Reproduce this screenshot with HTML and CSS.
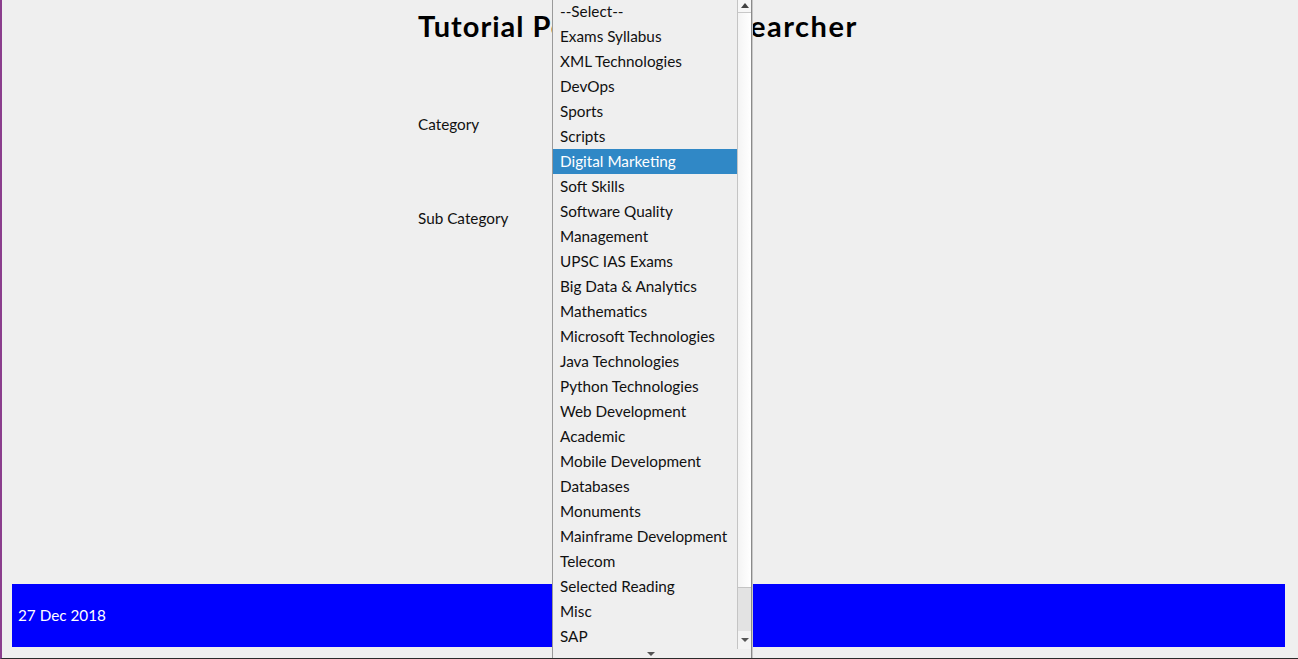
FILE: index.html
```html
<!DOCTYPE html>
<html>
<head>
<meta charset="utf-8">
<title>Tutorial Points Researcher</title>
<link rel="stylesheet" href="styles.css">
</head>
<body>
<div class="frame">
  <main class="content">
    <h1 class="title">Tutorial Points <span class="title-tail">Researcher</span></h1>
    <div class="field field-cat">Category</div>
    <div class="field field-sub">Sub Category</div>
  </main>
  <footer class="footer">27 Dec 2018</footer>
</div>
<div class="dropdown">
  <ul class="options">
    <li>--Select--</li>
    <li>Exams Syllabus</li>
    <li>XML Technologies</li>
    <li>DevOps</li>
    <li>Sports</li>
    <li>Scripts</li>
    <li class="active">Digital Marketing</li>
    <li>Soft Skills</li>
    <li>Software Quality</li>
    <li>Management</li>
    <li>UPSC IAS Exams</li>
    <li>Big Data &amp; Analytics</li>
    <li>Mathematics</li>
    <li>Microsoft Technologies</li>
    <li>Java Technologies</li>
    <li>Python Technologies</li>
    <li>Web Development</li>
    <li>Academic</li>
    <li>Mobile Development</li>
    <li>Databases</li>
    <li>Monuments</li>
    <li>Mainframe Development</li>
    <li>Telecom</li>
    <li>Selected Reading</li>
    <li>Misc</li>
    <li>SAP</li>
  </ul>
  <div class="scrollbar">
    <div class="sb-btn sb-up"><span class="tri-up"></span></div>
    <div class="sb-thumb"></div>
    <div class="sb-track"></div>
    <div class="sb-btn sb-down"><span class="tri-down"></span></div>
  </div>
  <div class="more"><span class="tri-down"></span></div>
</div>
</body>
</html>
```

FILE: styles.css
```css
html, body {
  margin: 0;
  padding: 0;
  background: #efefef;
  font-family: "Lato", "Open Sans", sans-serif;
  color: #111;
  overflow: hidden;
}

.frame {
  height: 658px;
  border-left: 2px solid #8b3e8d;
  border-bottom: 1px solid #2a2a2a;
  padding: 0 13px 0 10px;
  display: flex;
  flex-direction: column;
  box-sizing: content-box;
}

.content {
  flex: 1;
  padding-left: 406px;
}

.title {
  margin: 0;
  padding-top: 9px;
  font-size: 29px;
  font-weight: 700;
  line-height: 34px;
  color: #000;
  white-space: nowrap;
  letter-spacing: 1px;
}

.title-tail {
  margin-left: 72px;
  letter-spacing: 1.5px;
}

.field {
  font-size: 15.3px;
  line-height: 18px;
}

.field-cat { margin-top: 72px; }
.field-sub { margin-top: 76px; }

.footer {
  height: 63px;
  margin-bottom: 11px;
  background: #0000ff;
  color: #fff;
  font-size: 15.3px;
  display: flex;
  align-items: center;
  padding-left: 6px;
  padding-bottom: 2px;
  box-sizing: border-box;
}

.dropdown {
  position: absolute;
  left: 552px;
  top: -1px;
  width: 198px;
  height: 659px;
  background: #efefef;
  border-left: 1px solid #9a9a9a;
  border-right: 1px solid #8a8a8a;
  box-shadow: 1px 0 0 #c8c8c8;
  display: grid;
  grid-template-columns: 184px 14px;
  grid-template-rows: 650px 9px;
}

.options {
  list-style: none;
  margin: 0;
  padding: 0;
  grid-column: 1;
  grid-row: 1;
}

.options li {
  height: 25px;
  line-height: 25px;
  padding-left: 7px;
  font-size: 15.3px;
  color: #111;
  white-space: nowrap;
}

.options li.active {
  background: #3088c6;
  color: #fff;
}

.scrollbar {
  grid-column: 2;
  grid-row: 1;
  display: flex;
  flex-direction: column;
  border-left: 1px solid #c4c4c4;
  background: #fafafa;
}

.sb-btn {
  height: 13px;
  display: flex;
  align-items: center;
  justify-content: center;
  background: #f7f7f7;
}

.sb-up {
  height: 13px;
  border-bottom: 1px solid #c8c8c8;
}

.sb-thumb {
  height: 574px;
  background: linear-gradient(to right, #f4f4f4, #ffffff);
  border-bottom: 1px solid #c4c4c4;
}

.sb-track {
  flex: 1;
  background: #e3e3e3;
}

.sb-down {
  height: 18px;
  background: #f4f4f4;
}

.tri-up {
  width: 0;
  height: 0;
  border-left: 4px solid transparent;
  border-right: 4px solid transparent;
  border-bottom: 5px solid #444;
}

.tri-down {
  width: 0;
  height: 0;
  border-left: 4px solid transparent;
  border-right: 4px solid transparent;
  border-top: 4px solid #555;
}

.more {
  grid-column: 1 / span 2;
  grid-row: 2;
  display: flex;
  justify-content: center;
  align-items: center;
  padding-right: 2px;
}
```
